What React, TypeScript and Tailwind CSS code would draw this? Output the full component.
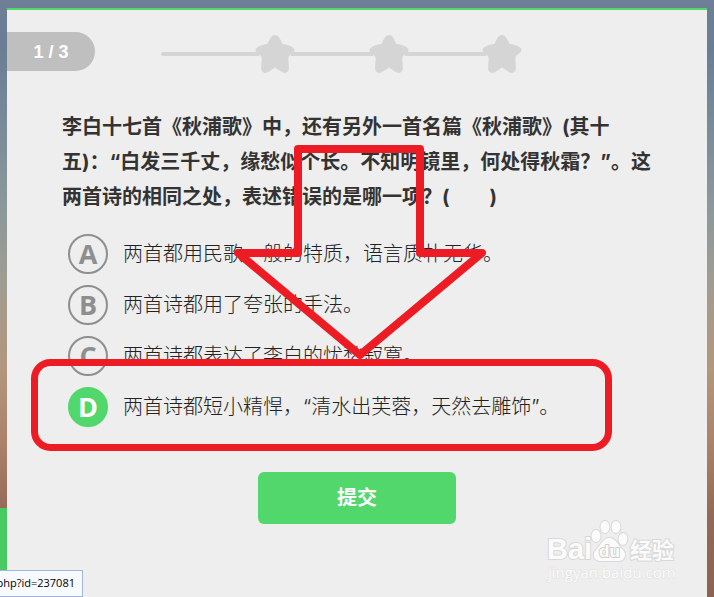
const options = [
  { id: "A", text: "两首都用民歌一般的特质，语言质朴无华。" },
  { id: "B", text: "两首诗都用了夸张的手法。" },
  { id: "C", text: "两首诗都表达了李白的忧愁寂寞。" },
  { id: "D", text: "两首诗都短小精悍，“清水出芙蓉，天然去雕饰”。" },
];

const Star: React.FC = () => {
  return (
    <svg viewBox="0 0 40 38" className="w-10 h-[38px] shrink-0" aria-hidden="true">
      <path
        fill="#d5d5d5"
        d="M20 0C23.500 0 25.500 4.500 27.500 9C33 9.500 39 11.500 39.500 15C39.500 17.500 35.500 19 33.500 22C33 26 34.500 33 33.500 35.500C32 38.500 28.500 38.500 26 36.500L20 32.500L14 36.500C11.500 38.500 8 38.500 6.500 35.500C5.500 33 7 26 6.500 22C4.500 19 0.500 17.500 0.500 15C1 11.500 7 9.500 12.500 9C14.500 4.500 16.500 0 20 0Z"
      />
    </svg>
  );
};

const Progress: React.FC = () => {
  return (
    <div className="flex items-center mt-[25px] mr-[185px] ml-[66px] grow">
      <span className="h-1 w-[98px] rounded-l-full bg-[#d5d5d5] -mr-1" />
      <Star />
      <span className="h-1 grow bg-[#d5d5d5] -mx-1" />
      <Star />
      <span className="h-1 grow bg-[#d5d5d5] -mx-1" />
      <Star />
    </div>
  );
};

const Watermark: React.FC = () => {
  return (
    <svg
      viewBox="0 0 134 64"
      className="absolute right-9 bottom-3 w-[134px] h-16 overflow-visible"
      aria-hidden="true"
      fill="#fbfbfb"
      stroke="#d8d8d8"
      strokeWidth="2"
      paintOrder="stroke"
    >
      <text x="3" y="38" fontSize="29" fontWeight="700" fontFamily="'Liberation Sans', sans-serif">
        Bai
      </text>
      <ellipse cx="52" cy="15" rx="4.500" ry="6" />
      <ellipse cx="61" cy="6" rx="4.500" ry="6" />
      <ellipse cx="72" cy="6" rx="4.500" ry="6" />
      <ellipse cx="79" cy="18" rx="4.500" ry="6" />
      <path d="M65 17C72 17 74 24 78 28C83 32 82 40 74 40H57C49 40 48 33 52 29C56 25 59 17 65 17Z" />
      <text x="55" y="36" fontSize="17" fontWeight="700" stroke="#d0d0d0" fontFamily="'Liberation Sans', sans-serif">
        du
      </text>
      <text x="86" y="37" fontSize="22" fontWeight="700" fontFamily="'Noto Sans CJK SC', sans-serif">
        经验
      </text>
      <text x="4" y="57" fontSize="15" stroke="#e0e0e0" strokeWidth="1" fontFamily="'Open Sans', sans-serif">
        jingyan.baidu.com
      </text>
    </svg>
  );
};

// Hand drawn red arrow and frame pointing at the right answer
const Marks: React.FC = () => {
  return (
    <svg
      viewBox="0 0 714 597"
      className="absolute left-0 top-0 w-[714px] h-[597px] pointer-events-none"
      aria-hidden="true"
      fill="none"
      stroke="#ed1c24"
      strokeLinejoin="round"
    >
      <path strokeWidth="8" d="M298 149H420V253H482L360 355L238 253H298Z" />
      <rect x="34.500" y="362.500" width="574" height="85" rx="16" strokeWidth="7" />
    </svg>
  );
};

const App: React.FC = () => {
  return (
    <div className="relative min-h-screen flex flex-col overflow-hidden px-[7px] pt-2 bg-[linear-gradient(#6e7f96,#697d95_8%,#8a989c_34%,#a09c92_47%,#b3967c_62%,#ab8069_75%,#946a57_86%,#8c6250)] font-['Inter','Noto_Sans_CJK_SC',sans-serif] text-[#333]">
      <span className="absolute left-0 bottom-0 w-[7px] h-[89px] bg-[#48c962]" />
      <main className="grow bg-[#eee] border-t-2 border-[#51d76b]">
        <header className="flex items-start">
          <p className="mt-[22px] w-[88px] h-[39px] rounded-r-full bg-[#bfbfbf] flex items-center justify-center text-white text-lg font-bold font-['Liberation_Sans',sans-serif]">
            1 / 3
          </p>
          <Progress />
        </header>
        <form className="px-[55px] pt-[37px]" onSubmit={(e) => e.preventDefault()}>
          <fieldset>
            <legend className="text-xl leading-[35px] font-bold">
              李白十七首《秋浦歌》中，还有另外一首名篇《秋浦歌》(其十五)：“白发三千丈，缘愁似个长。不知明镜里，何处得秋霜？”。这两首诗的相同之处，表述错误的是哪一项？(　　)
            </legend>
            <div className="mt-[19px] pl-[6px] flex flex-col gap-[11px]">
              {options.map((option) => (
                <label key={option.id} className="flex items-center gap-[15px] h-10 cursor-pointer">
                  <input
                    type="radio"
                    name="answer"
                    value={option.id}
                    defaultChecked={option.id === "D"}
                    className="peer sr-only"
                  />
                  <span className="size-10 shrink-0 rounded-full border-2 border-[#8e8e8e] text-[#8e8e8e] flex items-center justify-center pb-0.5 text-[27px] leading-none font-bold font-['Open_Sans',sans-serif] peer-checked:bg-[#51d76b] peer-checked:border-[#51d76b] peer-checked:text-white">
                    {option.id}
                  </span>
                  <span className="text-xl font-light text-[#222]">{option.text}</span>
                </label>
              ))}
            </div>
          </fieldset>
          <button
            type="submit"
            className="block mx-auto mt-[45px] w-[198px] h-[52px] rounded-md bg-[#51d76b] text-white text-xl font-bold cursor-pointer"
          >
            提交
          </button>
        </form>
      </main>
      <Watermark />
      <p className="absolute left-0 bottom-0 h-[27px] w-[83px] flex items-center justify-end pr-[7px] whitespace-nowrap border border-l-0 border-[#9fb8dc] bg-[#f7faff] text-[11px] text-black font-['Open_Sans',sans-serif]">
        php?id=237081
      </p>
      <Marks />
    </div>
  );
};

export default App;
